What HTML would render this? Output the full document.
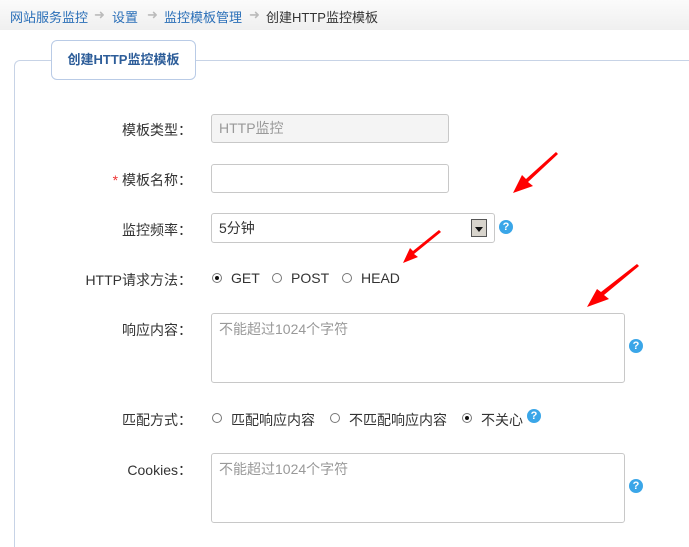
<!DOCTYPE html>
<html style="width:689px;height:547px;overflow:hidden"><head><meta charset="utf-8"><style>
*{margin:0;padding:0;box-sizing:border-box}
body{width:689px;height:547px;overflow:hidden;background:#fff;font-family:"Liberation Sans","Noto Sans CJK SC",sans-serif;font-size:14px;color:#333;position:relative}
.a{position:absolute;white-space:nowrap}
.bc{position:absolute;left:0;top:0;width:689px;height:30px;background:linear-gradient(#fbfbfb,#efefef)}
.bc span{position:absolute;top:7px;font-size:13px}
.lk{color:#2a6fb8}
.arr{color:#bbb;font-size:11px}
.fs{position:absolute;left:14px;top:60px;width:675px;height:487px;border:1px solid #c7d3e6;border-right:none;border-bottom:none;border-radius:6px 0 0 0}
.lg{position:absolute;left:51px;top:40px;width:145px;height:40px;border:1px solid #b9cbe6;border-radius:6px;background:#fff;font-weight:bold;color:#2d5d99;font-size:13px;text-align:center;line-height:38px}
.lb{position:absolute;right:497px;font-size:14px;color:#333;white-space:nowrap}
.in{position:absolute;border:1px solid #c8c8c8;border-radius:3px;background:#fff;color:#999;padding-left:7px}
.q{position:absolute;width:14px;height:14px;border-radius:50%;background:#3aa6e8;color:#fff;font-size:11px;font-weight:bold;text-align:center;line-height:14px}
.r{position:absolute;width:10px;height:10px;border:1px solid #777;border-radius:50%;background:#fff}
.r.on::after{content:"";position:absolute;left:2px;top:2px;width:4px;height:4px;border-radius:50%;background:#111}
</style></head><body>
<div class="bc">
<span class="lk" style="left:10px">网站服务监控</span>
<span class="arr" style="left:94px">➜</span>
<span class="lk" style="left:112px">设置</span>
<span class="arr" style="left:147px">➜</span>
<span class="lk" style="left:164px">监控模板管理</span>
<span class="arr" style="left:249px">➜</span>
<span style="left:266px;color:#333">创建HTTP监控模板</span>
</div>
<div class="fs"></div>
<div class="lg">创建HTTP监控模板</div>

<div class="lb" style="top:120px">模板类型：</div>
<div class="in" style="left:211px;top:114px;width:238px;height:29px;line-height:27px;background:#f4f4f4">HTTP监控</div>

<div class="lb" style="top:170px"><span style="color:#e33">*</span> 模板名称：</div>
<div class="in" style="left:211px;top:164px;width:238px;height:29px"></div>

<div class="lb" style="top:220px">监控频率：</div>
<div class="in" style="left:211px;top:213px;width:284px;height:30px;line-height:28px;color:#333">5分钟
<div style="position:absolute;right:7px;top:5px;width:16px;height:18px;background:#d8d4cc;border:1px solid #555"><div style="position:absolute;left:3px;top:7px;border-left:4px solid transparent;border-right:4px solid transparent;border-top:5px solid #111"></div></div></div>
<div class="q" style="left:499px;top:220px">?</div>

<div class="lb" style="top:270px">HTTP请求方法：</div>
<div class="r on" style="left:212px;top:273px"></div><div class="a" style="left:231px;top:270px">GET</div>
<div class="r" style="left:272px;top:273px"></div><div class="a" style="left:291px;top:270px">POST</div>
<div class="r" style="left:342px;top:273px"></div><div class="a" style="left:361px;top:270px">HEAD</div>

<div class="lb" style="top:320px">响应内容：</div>
<div class="in" style="left:211px;top:313px;width:414px;height:70px;padding-top:5px">不能超过1024个字符</div>
<div class="q" style="left:629px;top:339px">?</div>

<div class="lb" style="top:410px">匹配方式：</div>
<div class="r" style="left:212px;top:413px"></div><div class="a" style="left:231px;top:410px">匹配响应内容</div>
<div class="r" style="left:330px;top:413px"></div><div class="a" style="left:349px;top:410px">不匹配响应内容</div>
<div class="r on" style="left:462px;top:413px"></div><div class="a" style="left:481px;top:410px">不关心</div>
<div class="q" style="left:527px;top:409px">?</div>

<div class="lb" style="top:460px">Cookies：</div>
<div class="in" style="left:211px;top:453px;width:414px;height:70px;padding-top:5px">不能超过1024个字符</div>
<div class="q" style="left:629px;top:479px">?</div>

<svg class="a" style="left:0;top:0" width="689" height="547">
<g fill="#f00">
<polygon points="558,154 528,182 533,186 513,193 522,175 526,179 556,152"/>
<polygon points="441,232 414,254 418,257 403,263 410,248 413,251 439,230"/>
<polygon points="639,266 604,295 609,299 587,307 597,289 601,292 637,264"/>
</g></svg>
</body></html>
